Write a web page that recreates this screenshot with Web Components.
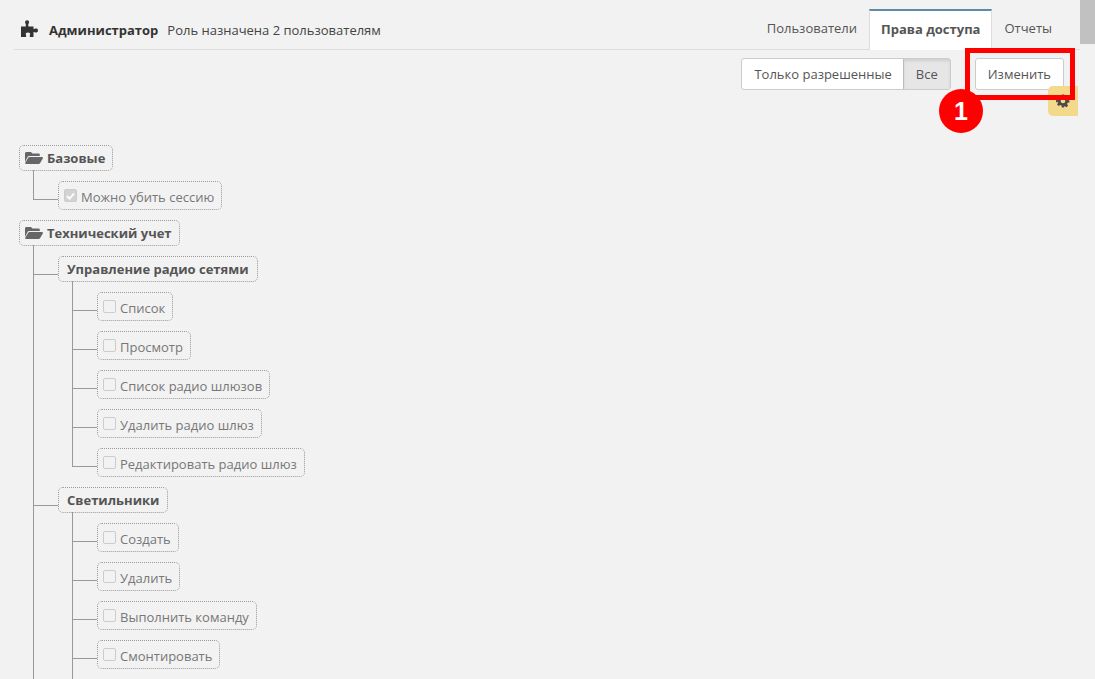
<!DOCTYPE html>
<html lang="ru"><head><meta charset="utf-8">
<style>
html,body{margin:0;height:679px;overflow:hidden;background:#f2f2f2}
body{font:13px "Open Sans",sans-serif;color:#555}
</style></head><body>
<role-page></role-page>
<template id="t-page"><style>
:host{display:block;position:relative;height:679px;overflow:hidden;padding-left:14px;padding-right:15px;box-sizing:border-box}
.noise{position:absolute;left:0;top:0;width:1095px;height:679px;z-index:-1}
.tools{display:flex;justify-content:flex-end;gap:24px;padding:8px 16px 0 0}
.tree{padding:55px 0 0 5px}
.scroll{position:absolute;right:0;top:0;width:15px;height:44px;background:#c1c1c1}
.gear{position:absolute;left:1048px;top:86px;width:30px;height:30px;box-sizing:border-box;padding-bottom:1px;background:#f2d98b;border-radius:5px 0 0 5px;display:flex;align-items:center;justify-content:center}
.red{position:absolute;left:965px;top:48px;width:110px;height:52px;box-sizing:border-box;border:5px solid #f00}
.num{position:absolute;left:939px;top:89px;width:44px;height:44px;border-radius:50%;background:#f00;color:#fff;font:bold 25px/44px "Liberation Sans",sans-serif;text-align:center}
</style>
<svg class="noise" aria-hidden="true"><filter id="n"><feTurbulence type="fractalNoise" baseFrequency=".8" numOctaves="2" seed="3"/><feColorMatrix values="0 0 0 0 0  0 0 0 0 0  0 0 0 0 0  .03 0 0 0 0"/></filter><rect width="100%" height="100%" filter="url(#n)"/></svg>
<role-header></role-header>
<div class="tools"><seg-group></seg-group><plain-btn>Изменить</plain-btn></div>
<div class="tree">
<tree-list root>
 <tree-node label="Базовые" folder>
  <tree-list><tree-node label="Можно убить сессию" check checked></tree-node></tree-list>
 </tree-node>
 <tree-node label="Технический учет" folder>
  <tree-list>
   <tree-node label="Управление радио сетями" bold>
    <tree-list>
     <tree-node label="Список" check></tree-node>
     <tree-node label="Просмотр" check></tree-node>
     <tree-node label="Список радио шлюзов" check></tree-node>
     <tree-node label="Удалить радио шлюз" check></tree-node>
     <tree-node label="Редактировать радио шлюз" check></tree-node>
    </tree-list>
   </tree-node>
   <tree-node label="Светильники" bold more>
    <tree-list>
     <tree-node label="Создать" check></tree-node>
     <tree-node label="Удалить" check></tree-node>
     <tree-node label="Выполнить команду" check></tree-node>
     <tree-node label="Смонтировать" check more></tree-node>
    </tree-list>
   </tree-node>
  </tree-list>
 </tree-node>
</tree-list>
</div>
<div class="scroll"></div>
<div class="gear"><svg width="14" height="14" viewBox="0 0 24 24"><path fill="#4a4a4a" fill-rule="evenodd" d="M10 1h4l.7 3.300 1.900.8 2.800-1.800 2.800 2.800-1.800 2.800.8 1.900L23 10.500v4l-3.300.7-.8 1.900 1.800 2.800-2.800 2.800-2.800-1.800-1.900.8L14 23h-4l-.7-3.300-1.900-.8-2.800 1.800-2.800-2.800 1.800-2.800-.8-1.900L0 14.500v-4l3.300-.7.8-1.900L2.300 5.100 5.100 2.300l2.800 1.800 1.400-.8zM12 8a4 4 0 1 0 0 8 4 4 0 0 0 0-8z"/></svg></div>
<div class="red"></div><div class="num">1</div>
</template>

<template id="t-header"><style>
:host{display:flex;justify-content:space-between;height:50px;box-sizing:border-box;border-bottom:1px solid #ddd;padding-right:16px}
.l{display:flex;align-items:center;padding:10px 0 0 7px}
svg{margin:-2px 10px 0 0}
b{font-weight:700;color:#333;margin-right:9px}
span{color:#444}
.tabs{display:flex;align-items:flex-end}
.tab{height:36px;padding:0 12px;line-height:30px;color:#555;box-sizing:border-box}
.on{height:41px;line-height:37px;margin-bottom:-1px;background:#fff;border:1px solid #ddd;border-top:2px solid #5b8ba5;border-bottom:0;font-weight:700;padding:0 11px;color:#555}
</style>
<div class="l"><svg width="18" height="17" viewBox="0 0 18 17"><path fill="#333" d="M0 6.500H4.800V4C3.900 3.400 3.900 1.600 4.600.8c.8-.9 2.400-.9 3 0 .7.8.6 2.600-.3 3.200V6.500H12.500V9.300c.7-.7 2-1.100 3.200-.7 1.700.6 1.700 3.300 0 3.800-1.200.4-2.500 0-3.200-.7V17H8.800V15c.5-.5.5-1.500 0-2-.8-.8-3-.8-3.700 0-.5.5-.5 1.500 0 2v2H0z"/></svg><b>Администратор</b><span>Роль назначена 2 пользователям</span></div>
<div class="tabs"><div class="tab">Пользователи</div><div class="tab on">Права доступа</div><div class="tab">Отчеты</div></div>
</template>

<template id="t-seg"><style>
:host{display:flex;height:32px;box-sizing:border-box;border:1px solid #ccc;border-radius:3px;background:#fff;color:#555}
div{padding:0 11px 0 12px;line-height:30px}
.on{padding:0 12px;background:#e6e6e6;border-left:1px solid #bbb;box-shadow:inset 0 2px 3px rgba(0,0,0,.1)}
</style><div>Только разрешенные</div><div class="on">Все</div></template>

<template id="t-btn"><style>
:host{display:block;height:32px;box-sizing:border-box;border:1px solid #ccc;border-radius:3px;background:#fff;padding:0 12px;line-height:30px;color:#555}
</style><slot></slot></template>

<template id="t-list"><style>
:host{display:flex;flex-direction:column;gap:10px}
:host(:not([root])){margin:10px 0 0 39px}
</style><slot></slot></template>

<template id="t-node"><style>
:host{display:block;position:relative}
.box{display:inline-flex;align-items:center;box-sizing:border-box;height:26px;padding:0 8px;border:1px dotted #999;border-radius:5px;font-weight:700;color:#555;white-space:nowrap;vertical-align:top}
.box.f{padding:0 7px 0 5px}
.box.c{height:29px;font-weight:400;color:#777;padding:0 7px 0 5px}
.box.c .t{margin-top:2px}
.cb{width:13px;height:13px;box-sizing:border-box;border:1px solid #ccc;border-radius:2px;margin-right:4px;display:flex;align-items:center;justify-content:center}
.cb.on{background:#d3d3d3}
svg.folder{margin-right:4px}
.h,.v{position:absolute;background:#999}
.h{left:-25px;width:25px;height:1px;top:18px}
.v{left:-25px;width:1px;top:-11px;bottom:0}
:host(:last-child) .v{bottom:auto;height:29px}
:host([more]) .v{height:auto;bottom:-11px}
.line{display:none}
:host([nested]) .line{display:block}
</style>
<div class="line v"></div><div class="line h"></div>
<div class="box"></div><slot></slot>
</template>

<script>
function tpl(id){return document.getElementById(id).content.cloneNode(true)}
class Simple extends HTMLElement{constructor(){super();this.attachShadow({mode:'open'}).appendChild(tpl(this.constructor.tid))}}
class RolePage extends Simple{static tid='t-page'}
class RoleHeader extends Simple{static tid='t-header'}
class SegGroup extends Simple{static tid='t-seg'}
class PlainBtn extends Simple{static tid='t-btn'}
class TreeList extends Simple{static tid='t-list'}
class TreeNode extends Simple{static tid='t-node';
 connectedCallback(){
  const b=this.shadowRoot.querySelector('.box');
  if(b.childNodes.length)return;
  if(!this.parentElement.hasAttribute('root'))this.setAttribute('nested','');
  if(this.hasAttribute('check')){b.classList.add('c');
   const c=document.createElement('span');c.className='cb'+(this.hasAttribute('checked')?' on':'');
   if(this.hasAttribute('checked'))c.innerHTML='<svg width="9" height="8" viewBox="0 0 10 9"><path d="M1 4.500l3 3 5-6" fill="none" stroke="#fff" stroke-width="2"/></svg>';
   b.appendChild(c);}
  if(this.hasAttribute('folder')){b.classList.add('f');
   b.insertAdjacentHTML('beforeend','<svg class="folder" width="18" height="14" viewBox="0 0 18 14"><path fill="#666" d="M0 2.500C0 1.600.6 1 1.500 1H6l1.500 1.500h6c.8 0 1.300.5 1.300 1.300V5H4.500C3.500 5 2.800 5.500 2.400 6.300L0 11zM4.600 6H17c.8 0 1.200.7.800 1.400L15 12.300c-.3.500-.8.700-1.300.7H1c-.7 0-1-.6-.7-1.200L3.200 6.800C3.500 6.300 4 6 4.600 6z"/></svg>');}
  const t=document.createElement('span');t.className='t';t.textContent=this.getAttribute('label');b.appendChild(t);
 }
}
customElements.define('role-header',RoleHeader);
customElements.define('seg-group',SegGroup);
customElements.define('plain-btn',PlainBtn);
customElements.define('tree-list',TreeList);
customElements.define('tree-node',TreeNode);
customElements.define('role-page',RolePage);
</script>
</body></html>
